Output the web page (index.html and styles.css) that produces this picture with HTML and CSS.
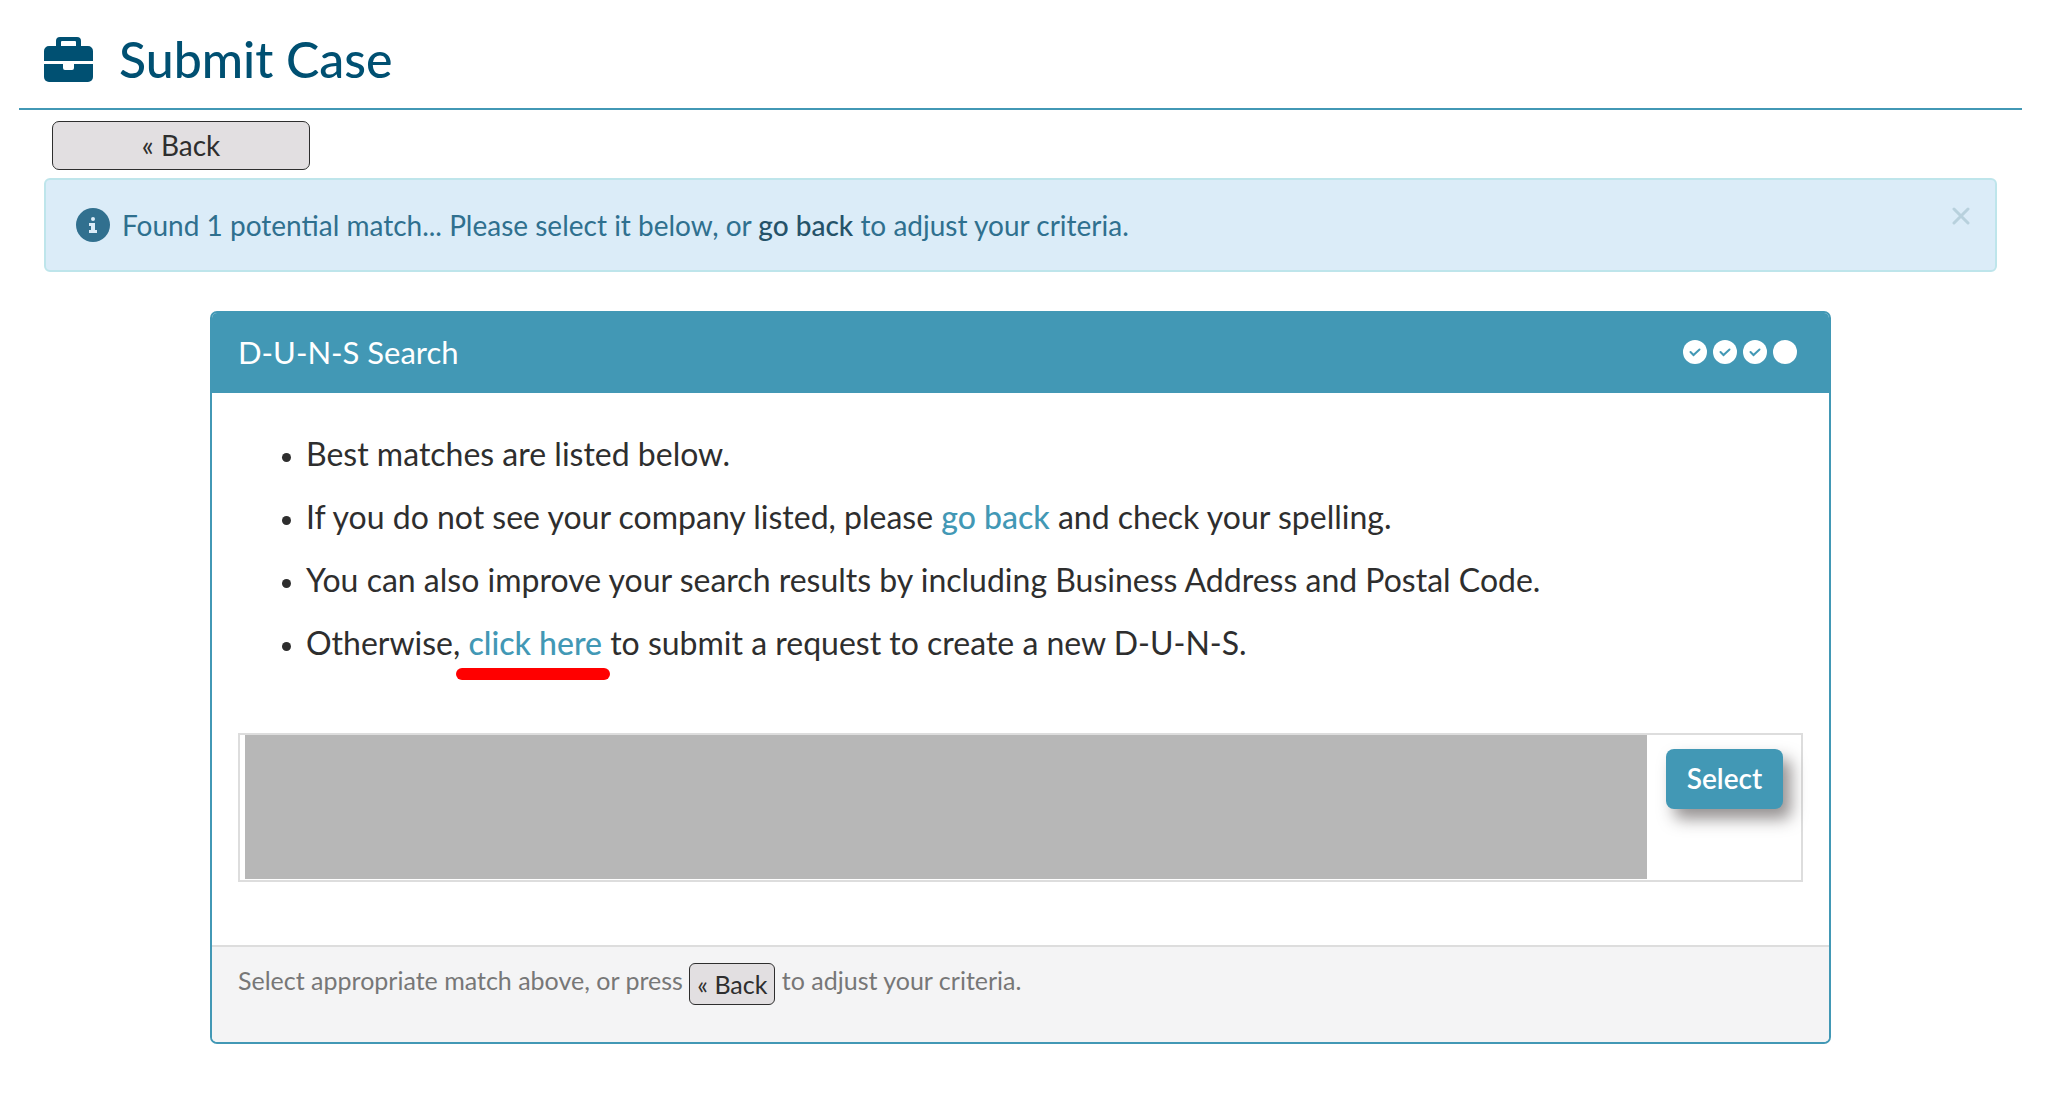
FILE: index.html
```html
<!DOCTYPE html>
<html lang="en">
<head>
  <meta charset="UTF-8">
  <title>Submit Case</title>
  <meta name="viewport" content="width=device-width, initial-scale=1.0">
  <link rel="stylesheet" href="styles.css">
</head>
<body>

<header class="page-header">
  <svg class="icon-case" viewBox="0 0 49 45" aria-hidden="true">
    <path fill-rule="evenodd" d="M12 9V4a4 4 0 0 1 4-4h17a4 4 0 0 1 4 4v5h7a5 5 0 0 1 5 5v13H0V14a5 5 0 0 1 5-5zM17 9h15V5a1 1 0 0 0-1-1H18a1 1 0 0 0-1 1z"/>
    <path d="M0 27h49v13a5 5 0 0 1-5 5H5a5 5 0 0 1-5-5z"/>
    <path fill="#fff" d="M0 24h49v3H30v4a2 2 0 0 1-2 2h-7a2 2 0 0 1-2-2v-4H0z"/>
  </svg>
  <h1>Submit Case</h1>
</header>

<main>
  <button type="button" class="btn-back">« Back</button>

  <div class="alert" role="alert">
    <svg class="icon-info" viewBox="0 0 34 34" aria-hidden="true">
      <circle cx="17" cy="17" r="17"/>
      <circle class="mark" cx="17" cy="11" r="2"/>
      <path class="mark" d="M13 15h6v7h2v3h-8v-3h2v-4h-2z"/>
    </svg>
    <p>Found 1 potential match... Please select it below, or <a href="#">go back</a> to adjust your criteria.</p>
    <button type="button" class="close" aria-label="Close">
      <svg viewBox="0 0 18 18"><path d="M2 2l14 14M16 2L2 16"/></svg>
    </button>
  </div>

  <section class="card">
    <div class="card-header">
      <h2>D-U-N-S Search</h2>
      <div class="steps">
        <svg viewBox="0 0 24 24"><circle cx="12" cy="12" r="12"/><path d="M7.500 12l3 3 6-5.500"/></svg>
        <svg viewBox="0 0 24 24"><circle cx="12" cy="12" r="12"/><path d="M7.500 12l3 3 6-5.500"/></svg>
        <svg viewBox="0 0 24 24"><circle cx="12" cy="12" r="12"/><path d="M7.500 12l3 3 6-5.500"/></svg>
        <svg viewBox="0 0 24 24"><circle cx="12" cy="12" r="12"/></svg>
      </div>
    </div>

    <div class="card-body">
      <ul>
        <li>Best matches are listed below.</li>
        <li>If you do not see your company listed, please <a href="#">go back</a> and check your spelling.</li>
        <li>You can also improve your search results by including Business Address and Postal Code.</li>
        <li>Otherwise, <a href="#" class="marked">click here</a> to submit a request to create a new D-U-N-S.</li>
      </ul>

      <table>
        <tr>
          <td class="match"><div class="redacted"></div></td>
          <td class="action"><button type="button" class="btn-select">Select</button></td>
        </tr>
      </table>
    </div>

    <div class="card-footer">
      Select appropriate match above, or press <button type="button" class="btn-key">« Back</button> to adjust your criteria.
    </div>
  </section>
</main>

</body>
</html>
```
FILE: styles.css
```css
* { box-sizing: border-box; }
body {
  margin: 0;
  padding: 0 26px 0 19px;
  background: #fff;
  color: #2e2e2e;
  font-family: Lato, "Liberation Sans", sans-serif;
  font-size: 28px;
}
h1, h2, p { margin: 0; font-weight: 400; }
button { font-family: inherit; cursor: pointer; }
a { text-decoration: none; }

.page-header {
  display: flex;
  align-items: center;
  gap: 26px;
  height: 110px;
  padding: 10px 26px 0 25px;
  border-bottom: 2px solid #4298b5;
  color: #005072;
}
.page-header h1 { font-size: 50px; font-weight: 500; }
.icon-case {
  width: 49px;
  height: 45px;
  fill: #005072;
}

main { padding: 11px 25px 0; }
.btn-back {
  display: block;
  width: 258px;
  height: 49px;
  margin: 0 0 8px 8px;
  padding: 0 0 2px;
  border: 1px solid #2e2e2e;
  border-radius: 7px;
  background: #e2dfe1;
  color: #2e2e2e;
  font-size: 28px;
}

.alert {
  display: flex;
  align-items: center;
  gap: 12px;
  min-height: 94px;
  padding: 0 25px 0 30px;
  border: 2px solid #bee5eb;
  border-radius: 6px;
  background: #dbecf8;
  color: #2f708f;
}
.alert a { color: #245269; font-weight: 500; }
.icon-info {
  width: 34px;
  height: 34px;
  fill: #31708f;
}
.icon-info .mark { fill: #dbecf8; }
.close {
  align-self: flex-start;
  margin: 27px 0 0 auto;
  padding: 0;
  border: 0;
  background: none;
  line-height: 0;
}
.close svg {
  width: 18px;
  height: 18px;
  stroke: #b8d1dd;
  stroke-width: 3;
  stroke-linecap: round;
}

.card {
  width: 83%;
  margin: 39px auto 0;
  border: 2px solid #4298b5;
  border-radius: 7px;
  overflow: hidden;
}
.card-header {
  display: flex;
  align-items: center;
  justify-content: space-between;
  height: 80px;
  padding: 0 32px 2px 26px;
  background: #4298b5;
  color: #fff;
}
.card-header h2 { font-size: 31px; }
.steps { display: flex; gap: 6px; }
.steps svg {
  width: 24px;
  height: 24px;
  fill: #fff;
}
.steps path {
  fill: none;
  stroke: #4298b5;
  stroke-width: 2;
  stroke-linecap: round;
}

.card-body { padding: 29px 26px 63px; }
ul {
  margin: 0 0 59px;
  padding-left: 68px;
  font-size: 32px;
  line-height: 63px;
}
li::marker { font-size: 26px; }
li a { color: #4298b5; font-weight: 500; }
.marked { position: relative; }
.marked::after {
  content: "";
  position: absolute;
  left: -12px;
  right: -8px;
  bottom: -18px;
  height: 12px;
  border-radius: 6px;
  background: #f00;
}

table {
  width: 100%;
  border: 2px solid #ddd;
  border-spacing: 0;
}
td { padding: 0; vertical-align: top; }
.match { padding: 0 0 1px 5px; }
.redacted { height: 144px; background: #b7b7b7; }
.action { width: 154px; padding: 14px 0 0 19px; }
.btn-select {
  width: 117px;
  height: 60px;
  padding: 0 0 2px;
  border: 0;
  border-radius: 8px;
  background: #4298b5;
  box-shadow: 8px 10px 16px rgba(46, 38, 38, 0.5);
  color: #fff;
  font-size: 28px;
  font-weight: 600;
}

.card-footer {
  height: 97px;
  padding: 16px 26px 0;
  border-top: 2px solid #ddd;
  background: #f4f4f5;
  color: #777;
  font-size: 25px;
}
.btn-key {
  height: 42px;
  padding: 0 7px;
  border: 1px solid #2e2e2e;
  border-radius: 6px;
  background: #e2dfe1;
  color: #2e2e2e;
  font-size: 25px;
  vertical-align: middle;
}
```
